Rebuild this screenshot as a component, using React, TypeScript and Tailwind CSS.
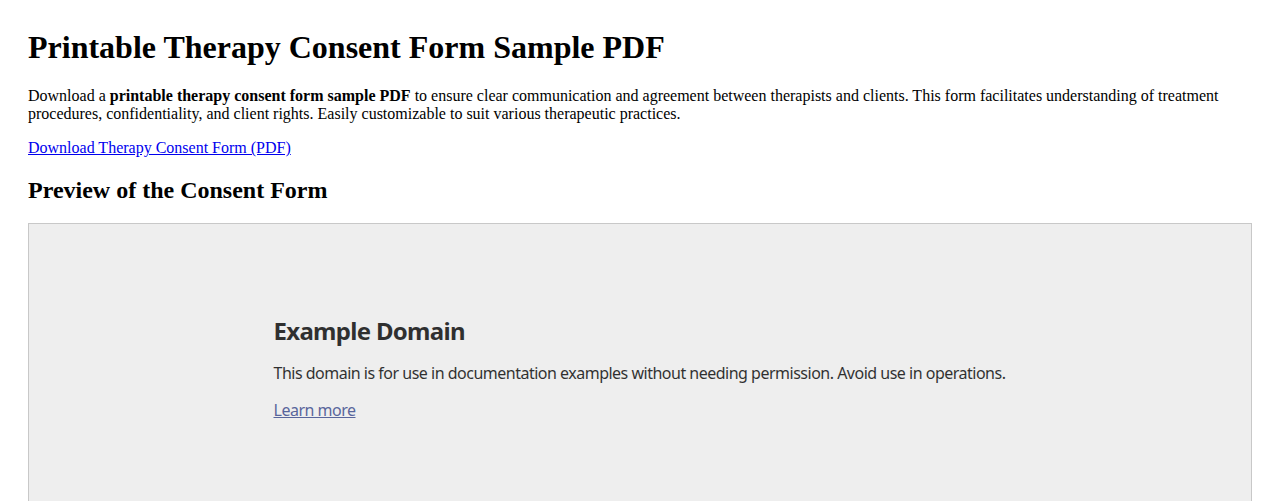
export default function App() {
  return (
    <div className="min-h-screen bg-white px-[28px] pt-[29px] font-['Liberation_Serif',serif] text-black">
      <h1 className="mb-[21.44px] text-[32px] font-bold leading-[normal]">
        Printable Therapy Consent Form Sample PDF
      </h1>
      <p className="text-[16px] leading-[normal]">
        Download a <strong className="font-bold">printable therapy consent form sample PDF</strong> to ensure clear
        communication and agreement between therapists and clients. This form facilitates understanding of treatment
        procedures, confidentiality, and client rights. Easily customizable to suit various therapeutic practices.
      </p>
      <p className="my-4 text-[16px] leading-[normal]">
        <a href="#" className="text-[#0000EE] underline">
          Download Therapy Consent Form (PDF)
        </a>
      </p>
      <h2 className="mb-[18.92px] mt-[19.92px] text-[24px] font-bold leading-[normal]">Preview of the Consent Form</h2>
      <div className="h-[600px] w-[calc(100%+2px)] overflow-hidden border border-[#c8c8c8] bg-[#eee]">
        <div className="mx-auto mt-[91px] w-[733px] font-['Noto_Sans',sans-serif] leading-[1.33] opacity-80">
          <h1 className="mb-[16px] text-[24px] font-bold tracking-[-0.7px]">Example Domain</h1>
          <p className="my-4 whitespace-nowrap text-[16px] tracking-[-0.5px]">
            This domain is for use in documentation examples without needing permission. Avoid use in operations.
          </p>
          <p className="my-4 text-[16px] tracking-[-0.5px]">
            <a href="#" className="text-[#334488] underline">
              Learn more
            </a>
          </p>
        </div>
      </div>
    </div>
  );
}
